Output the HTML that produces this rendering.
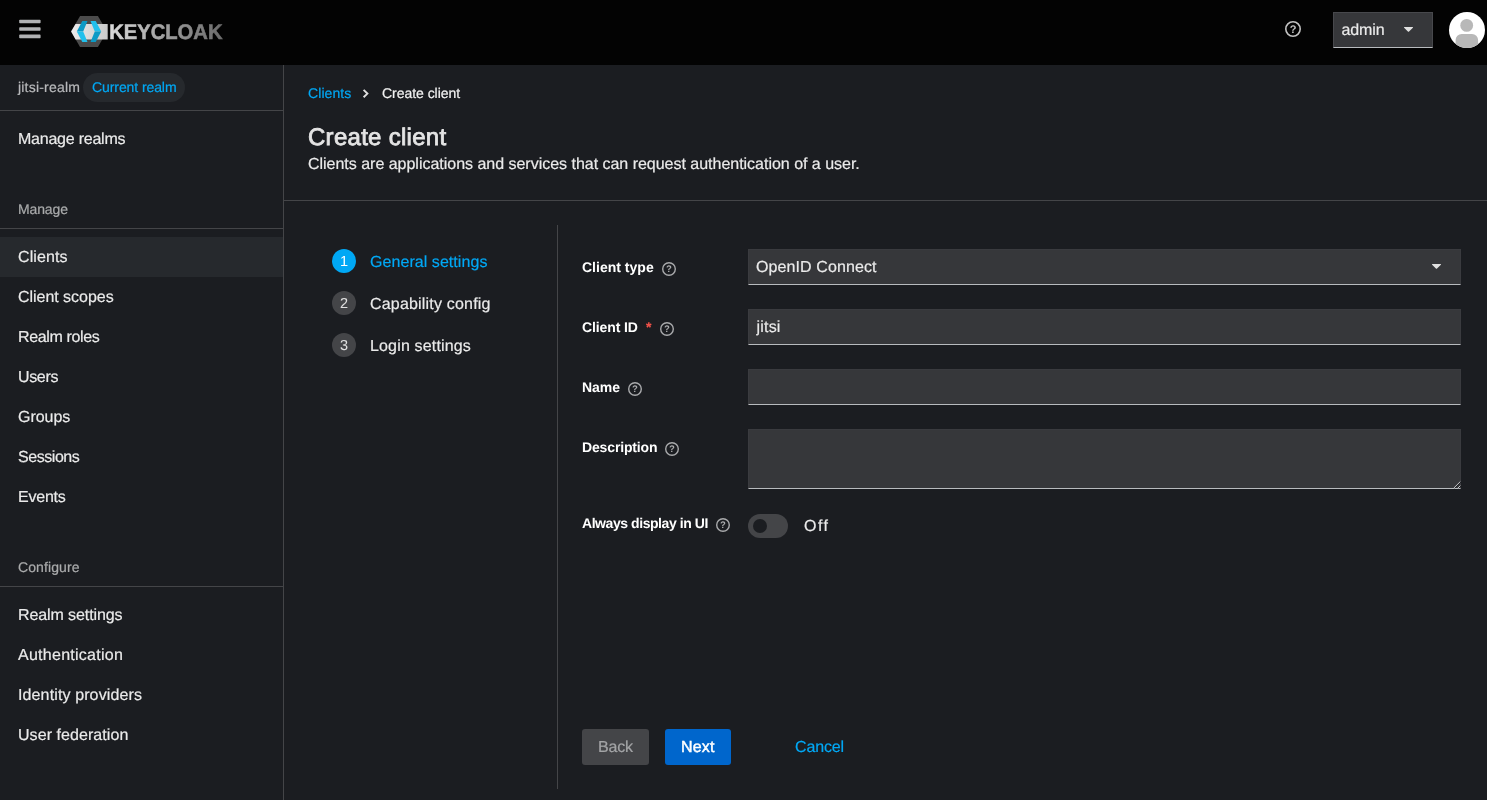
<!DOCTYPE html>
<html lang="en">
<head>
<meta charset="utf-8">
<title>Keycloak Administration Console</title>
<style>
*{box-sizing:border-box;margin:0;padding:0}
html,body{width:1487px;height:800px;overflow:hidden;background:#1b1d21;color:#e0e0e0;
  font-family:"Liberation Sans",sans-serif;font-size:16px}
a{text-decoration:none}
.a,.t{position:absolute;display:block}
.t{white-space:nowrap;line-height:1;font-weight:normal;-webkit-text-stroke:0.2px}
label.t{-webkit-text-stroke:0}
#header{position:absolute;left:0;top:0;width:1487px;height:65px;background:#030303}
#sidebar{position:absolute;left:0;top:65px;width:284px;height:735px;background:#1b1d21;border-right:1px solid #444548}
.hl{position:absolute;height:1px;background:#444548}
.inp{position:absolute;left:748px;width:713px;height:36px;background:#36373a;border:1px solid #3a3b3f;border-bottom-color:#b8bbbe}
.num{position:absolute;width:24px;height:24px;border-radius:12px;text-align:center;font-size:14.5px;line-height:27px;overflow:hidden}
</style>
</head>
<body>
<div id="app" style="position:absolute;left:0;top:0;width:1487px;height:800px;will-change:transform;text-rendering:geometricPrecision">
<header id="header">
  <svg class="a" style="left:0;top:0" width="260" height="65" viewBox="0 0 260 65">
    <defs>
      <linearGradient id="kg" gradientUnits="userSpaceOnUse" x1="109" x2="223" y1="0" y2="0">
        <stop offset="0" stop-color="#dcdcdc"/><stop offset="0.42" stop-color="#a6a6a6"/><stop offset="1" stop-color="#6b6b6b"/>
      </linearGradient>
      <linearGradient id="bg" gradientUnits="userSpaceOnUse" x1="71" x2="108" y1="0" y2="0">
        <stop offset="0" stop-color="#ececec"/><stop offset="1" stop-color="#c9c9c9"/>
      </linearGradient>
    </defs>
    <rect x="19.2" y="19.7" width="21.4" height="3.6" rx="0.8" fill="#b1b2b4"/>
    <rect x="19.2" y="27.2" width="21.4" height="3.6" rx="0.8" fill="#b1b2b4"/>
    <rect x="19.2" y="34.6" width="21.4" height="3.6" rx="0.8" fill="#b1b2b4"/>
    <polygon points="80.05,16.1 97.95,16.1 106.9,31.6 97.95,47.1 80.05,47.1 71.1,31.6" fill="#4b4b4b"/>
    <polygon points="75.5,24 107.7,24 107.7,39.4 75.6,39.4 71.1,31.6" fill="url(#bg)"/>
    <polygon points="82.3,20.9 87.5,20.9 83.2,31.6 76.8,31.6" fill="#0c9ac6"/>
    <polygon points="76.8,31.6 83.2,31.6 87.5,42.1 82.3,42.1" fill="#22c0ec"/>
    <polygon points="95.7,20.9 90.5,20.9 94.8,31.6 101.2,31.6" fill="#22c0ec"/>
    <polygon points="101.2,31.6 94.8,31.6 90.5,42.1 95.7,42.1" fill="#0c9ac6"/>
    <text x="109.2" y="39.4" font-family="Liberation Sans, sans-serif" font-weight="bold" font-size="21.2" fill="url(#kg)" stroke="url(#kg)" stroke-width="0.55" textLength="113.3" lengthAdjust="spacingAndGlyphs">KEYCLOAK</text>
  </svg>
  <svg class="a" style="left:1283px;top:19px" width="20" height="20" viewBox="0 0 20 20">
    <circle cx="10" cy="10" r="7.2" fill="none" stroke="#c2c2c2" stroke-width="1.6"/>
    <text x="10" y="14" text-anchor="middle" font-family="Liberation Sans, sans-serif" font-weight="bold" font-size="11" fill="#c2c2c2">?</text>
  </svg>
  <div class="a" style="left:1333px;top:12px;width:100px;height:36px;background:#36373a;border:1px solid #47484c;border-bottom-color:#b8bbbe"></div>
  <span class="t" style="left:1341.5px;top:23px;font-size:16px;color:#eaeaea;letter-spacing:-0.116px">admin</span>
  <svg class="a" style="left:1403px;top:26.1px" width="11.2" height="6.53" viewBox="0 0 12 7"><path d="M1.5 1h8.8a.45.45 0 0 1 .33.77L6.2 6.1a.5.5 0 0 1-.7 0L1.17 1.77A.45.45 0 0 1 1.5 1z" fill="#e0e0e0"/></svg>
  <svg class="a" style="left:1449px;top:12px" width="36" height="36" viewBox="0 0 36 36">
    <defs><clipPath id="av"><circle cx="18" cy="18" r="18"/></clipPath></defs>
    <circle cx="18" cy="18" r="18" fill="#fff"/>
    <g clip-path="url(#av)">
      <circle cx="17.7" cy="13.4" r="6.4" fill="#b8b8b8"/>
      <path d="M6.6 37V28a6.1 6.1 0 0 1 6.1-6.1h10.3a6.1 6.1 0 0 1 6.1 6.1V37z" fill="#b8b8b8"/>
    </g>
  </svg>
</header>

<nav id="sidebar"></nav>
<span class="t" style="left:18px;top:80px;font-size:14px;color:#b8b9bb;letter-spacing:0.196px">jitsi-realm</span>
<div class="a" style="left:83px;top:73px;width:102px;height:29px;border-radius:14.5px;background:#26292d"></div>
<span class="t" style="left:92px;top:80px;font-size:14px;color:#00a8f5;letter-spacing:-0.085px">Current realm</span>
<div class="hl" style="left:0;top:110px;width:283px"></div>
<a class="t" style="left:18px;top:132px;font-size:16px;color:#eaeaea;letter-spacing:-0.230px">Manage realms</a>
<h2 class="t" style="left:18px;top:202px;font-size:14px;color:#aaabac;letter-spacing:-0.121px">Manage</h2>
<div class="hl" style="left:0;top:228px;width:283px"></div>
<div class="a" style="left:0;top:237px;width:283px;height:40px;background:#26292d"></div>
<a class="t" style="left:18px;top:250px;font-size:16px;color:#eaeaea;letter-spacing:0.098px">Clients</a>
<a class="t" style="left:18px;top:290px;font-size:16px;color:#eaeaea;letter-spacing:-0.033px">Client scopes</a>
<a class="t" style="left:18px;top:330px;font-size:16px;color:#eaeaea;letter-spacing:-0.350px">Realm roles</a>
<a class="t" style="left:18px;top:370px;font-size:16px;color:#eaeaea;letter-spacing:-0.346px">Users</a>
<a class="t" style="left:18px;top:410px;font-size:16px;color:#eaeaea;letter-spacing:-0.020px">Groups</a>
<a class="t" style="left:18px;top:450px;font-size:16px;color:#eaeaea;letter-spacing:-0.444px">Sessions</a>
<a class="t" style="left:18px;top:490px;font-size:16px;color:#eaeaea;letter-spacing:-0.221px">Events</a>
<h2 class="t" style="left:18px;top:560px;font-size:14px;color:#aaabac;letter-spacing:0.108px">Configure</h2>
<div class="hl" style="left:0;top:586px;width:283px"></div>
<a class="t" style="left:18px;top:608px;font-size:16px;color:#eaeaea;letter-spacing:-0.094px">Realm settings</a>
<a class="t" style="left:18px;top:648px;font-size:16px;color:#eaeaea;letter-spacing:0.266px">Authentication</a>
<a class="t" style="left:18px;top:688px;font-size:16px;color:#eaeaea;letter-spacing:0.124px">Identity providers</a>
<a class="t" style="left:18px;top:728px;font-size:16px;color:#eaeaea;letter-spacing:0.065px">User federation</a>

<main>
<a class="t" style="left:308px;top:86px;font-size:14px;color:#00a8f5;letter-spacing:0.079px">Clients</a>
<svg class="a" style="left:360px;top:87px" width="12" height="13" viewBox="0 0 12 13"><path d="M3.6 2.9l3.8 3.7-3.8 3.7" fill="none" stroke="#e0e0e0" stroke-width="1.9"/></svg>
<span class="t" style="left:382px;top:86px;font-size:14px;color:#f2f2f2;letter-spacing:-0.039px">Create client</span>
<h1 class="t" style="left:308px;top:126px;font-size:24px;color:#e4e4e4;font-weight:normal;-webkit-text-stroke:0.8px #e4e4e4;letter-spacing:0.280px">Create client</h1>
<p class="t" style="left:308px;top:157px;font-size:16px;color:#eaeaea;letter-spacing:-0.018px">Clients are applications and services that can request authentication of a user.</p>
<div class="hl" style="left:284px;top:200px;width:1203px"></div>

<div class="hl" style="left:557px;top:225px;width:1px;height:564px"></div>
<div class="num" style="left:332px;top:249px;background:#00a8f5;color:#fff">1</div>
<span class="t" style="left:370px;top:255px;font-size:16px;color:#00a8f5;letter-spacing:0.059px">General settings</span>
<div class="num" style="left:332px;top:291px;background:#444548;color:#e0e0e0">2</div>
<span class="t" style="left:370px;top:297px;font-size:16px;color:#eaeaea;letter-spacing:0.190px">Capability config</span>
<div class="num" style="left:332px;top:333px;background:#444548;color:#e0e0e0">3</div>
<span class="t" style="left:370px;top:339px;font-size:16px;color:#eaeaea;letter-spacing:0.160px">Login settings</span>

<label class="t" style="left:582px;top:260px;font-size:14px;color:#ffffff;font-weight:bold;letter-spacing:0.010px">Client type</label>
<svg class="a" style="left:661px;top:261px" width="16" height="16" viewBox="0 0 16 16"><circle cx="8" cy="8" r="6.3" fill="none" stroke="#a9aaac" stroke-width="1.4"/><text x="8" y="11.4" text-anchor="middle" font-family="Liberation Sans, sans-serif" font-weight="bold" font-size="9.5" fill="#a9aaac">?</text></svg>
<div class="inp" style="top:249px"></div>
<span class="t" style="left:756px;top:260px;font-size:16px;color:#eaeaea;letter-spacing:0.099px">OpenID Connect</span>
<svg class="a" style="left:1431px;top:263.2px" width="11.2" height="6.53" viewBox="0 0 12 7"><path d="M1.5 1h8.8a.45.45 0 0 1 .33.77L6.2 6.1a.5.5 0 0 1-.7 0L1.17 1.77A.45.45 0 0 1 1.5 1z" fill="#e0e0e0"/></svg>

<label class="t" style="left:582px;top:320px;font-size:14px;color:#ffffff;font-weight:bold;letter-spacing:-0.118px">Client ID</label>
<span class="t" style="left:646px;top:320px;font-size:14px;color:#f4534a;font-weight:bold;letter-spacing:0.392px">*</span>
<svg class="a" style="left:659px;top:321px" width="16" height="16" viewBox="0 0 16 16"><circle cx="8" cy="8" r="6.3" fill="none" stroke="#a9aaac" stroke-width="1.4"/><text x="8" y="11.4" text-anchor="middle" font-family="Liberation Sans, sans-serif" font-weight="bold" font-size="9.5" fill="#a9aaac">?</text></svg>
<div class="inp" style="top:309px"></div>
<span class="t" style="left:756.5px;top:320px;font-size:16px;color:#eaeaea;letter-spacing:0.201px">jitsi</span>

<label class="t" style="left:582px;top:380px;font-size:14px;color:#ffffff;font-weight:bold;letter-spacing:-0.052px">Name</label>
<svg class="a" style="left:627px;top:381px" width="16" height="16" viewBox="0 0 16 16"><circle cx="8" cy="8" r="6.3" fill="none" stroke="#a9aaac" stroke-width="1.4"/><text x="8" y="11.4" text-anchor="middle" font-family="Liberation Sans, sans-serif" font-weight="bold" font-size="9.5" fill="#a9aaac">?</text></svg>
<div class="inp" style="top:369px"></div>

<label class="t" style="left:582px;top:440px;font-size:14px;color:#ffffff;font-weight:bold;letter-spacing:-0.147px">Description</label>
<svg class="a" style="left:664px;top:441px" width="16" height="16" viewBox="0 0 16 16"><circle cx="8" cy="8" r="6.3" fill="none" stroke="#a9aaac" stroke-width="1.4"/><text x="8" y="11.4" text-anchor="middle" font-family="Liberation Sans, sans-serif" font-weight="bold" font-size="9.5" fill="#a9aaac">?</text></svg>
<div class="inp" style="top:429px;height:60px"></div>
<svg class="a" style="left:1450px;top:478px" width="11" height="11" viewBox="0 0 11 11"><path d="M4.7 10.2L11 3.9M8.8 10.2L11 8" stroke="#1d1e22" stroke-width="1" fill="none"/><path d="M3.7 10.2L10.3 3.6M7.8 10.2L10.3 7.7" stroke="#c9cacc" stroke-width="1" fill="none"/></svg>

<label class="t" style="left:582px;top:516px;font-size:14px;color:#ffffff;font-weight:bold;letter-spacing:-0.438px">Always display in UI</label>
<svg class="a" style="left:715px;top:517px" width="16" height="16" viewBox="0 0 16 16"><circle cx="8" cy="8" r="6.3" fill="none" stroke="#a9aaac" stroke-width="1.4"/><text x="8" y="11.4" text-anchor="middle" font-family="Liberation Sans, sans-serif" font-weight="bold" font-size="9.5" fill="#a9aaac">?</text></svg>
<div class="a" style="left:748px;top:514px;width:40px;height:24px;border-radius:12px;background:#444548"></div>
<div class="a" style="left:753px;top:519px;width:14px;height:14px;border-radius:7px;background:#1b1d21"></div>
<span class="t" style="left:804px;top:519px;font-size:16px;color:#eaeaea;letter-spacing:1.440px">Off</span>

<div class="a" style="left:582px;top:729px;width:67px;height:36px;border-radius:3px;background:#444548"></div>
<span class="t" style="left:598px;top:740px;font-size:16px;color:#a3a4a6;letter-spacing:-0.210px">Back</span>
<div class="a" style="left:665px;top:729px;width:66px;height:36px;border-radius:3px;background:#0066cc"></div>
<span class="t" style="left:681px;top:740px;font-size:16px;color:#ffffff;font-weight:normal;-webkit-text-stroke:0.45px #fff;letter-spacing:0.198px">Next</span>
<a class="t" style="left:795px;top:740px;font-size:16px;color:#00a8f5;letter-spacing:-0.127px">Cancel</a>
</main>
</div>
</body>
</html>
